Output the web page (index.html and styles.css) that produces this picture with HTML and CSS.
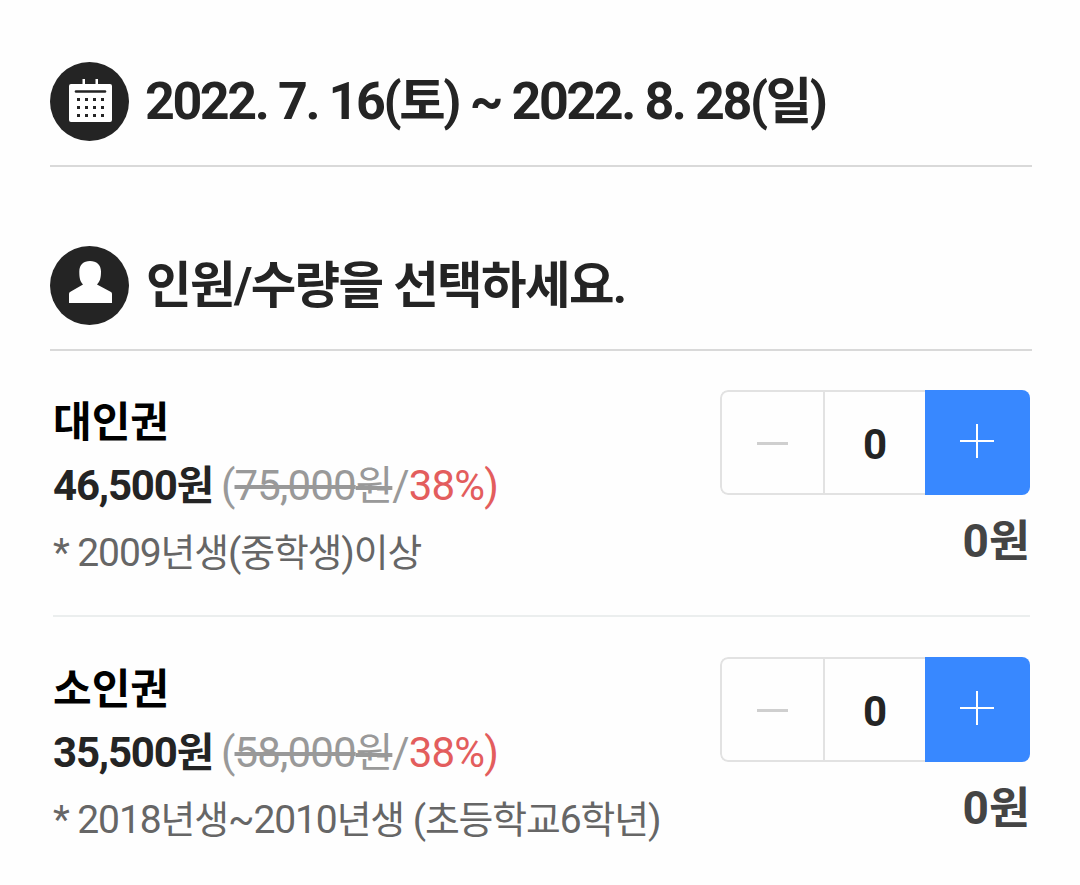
FILE: index.html
```
<!DOCTYPE html>
<html lang="ko">
<head>
    <meta charset="UTF-8">
    <title>인원/수량 선택</title>
    <link rel="stylesheet" href="styles.css">
</head>
<body>

<div class="booking">
    <div class="head">
        <svg class="head-icon" viewBox="0 0 79 79">
            <circle cx="39.5" cy="39.5" r="39.5" fill="#242424"/>
            <path d="M21 22h11.500v-5h2.500v5h10.500v-5h2.500v5h12a2 2 0 0 1 2 2v34a2 2 0 0 1-2 2H21a2 2 0 0 1-2-2V24a2 2 0 0 1 2-2z" fill="#fff"/>
            <path d="M26 29.500h29" stroke="#242424" stroke-width="2.600" stroke-linecap="round"/>
            <path d="M27 37.500h30M27 45.500h30M27 53.500h30" stroke="#242424" stroke-width="3" stroke-dasharray="3 5"/>
        </svg>
        <h2 class="date">2022. 7. 16(<span class="ko">토</span>) ~ 2022. 8. 28(<span class="ko">일</span>)</h2>
    </div>

    <div class="head">
        <svg class="head-icon" viewBox="0 0 79 79">
            <circle cx="39.5" cy="39.5" r="39.5" fill="#242424"/>
            <path d="M40 15c6.500 0 11 4 11 10.500 0 6-1 10-4 13L61 46q1 .7 1 2v9H19v-9q0-1.300 1-2l13-7.500c-3-3-3.700-7-3.700-13C29.300 19 33.500 15 40 15z" fill="#fff"/>
        </svg>
        <h2 class="guide">인원/수량을 선택하세요.</h2>
    </div>

    <ul class="tickets">
        <li class="ticket">
            <div class="info">
                <strong class="name">대인권</strong>
                <p class="price"><b>46,500<span class="ko">원</span></b> <span class="origin">(<del>75,000<span class="ko">원</span></del>/</span><span class="rate">38%)</span></p>
                <p class="note">* 2009<span class="ko">년생</span>(<span class="ko">중학생</span>)<span class="ko">이상</span></p>
            </div>
            <div class="side">
                <div class="stepper">
                    <button class="minus"><svg width="31" height="3"><path d="M0 1.500h31" stroke="#cfcfcf" stroke-width="3"/></svg></button>
                    <span class="count">0</span>
                    <button class="plus"><svg width="34" height="34"><path d="M0 17h34M17 0v34" stroke="#fff" stroke-width="2"/></svg></button>
                </div>
                <p class="sum">0<span class="ko">원</span></p>
            </div>
        </li>
        <li class="ticket">
            <div class="info">
                <strong class="name">소인권</strong>
                <p class="price"><b>35,500<span class="ko">원</span></b> <span class="origin">(<del>58,000<span class="ko">원</span></del>/</span><span class="rate">38%)</span></p>
                <p class="note">* 2018<span class="ko">년생</span>~2010<span class="ko">년생</span> (<span class="ko">초등학교</span>6<span class="ko">학년</span>)</p>
            </div>
            <div class="side">
                <div class="stepper">
                    <button class="minus"><svg width="31" height="3"><path d="M0 1.500h31" stroke="#cfcfcf" stroke-width="3"/></svg></button>
                    <span class="count">0</span>
                    <button class="plus"><svg width="34" height="34"><path d="M0 17h34M17 0v34" stroke="#fff" stroke-width="2"/></svg></button>
                </div>
                <p class="sum">0<span class="ko">원</span></p>
            </div>
        </li>
    </ul>
</div>

</body>
</html>
```
FILE: styles.css
```
* {
    box-sizing: border-box;
}
body {
    margin: 0;
    background: #fefefe;
    color: #242424;
    font-family: Roboto, "Noto Sans CJK KR", sans-serif;
}
h2, p, ul {
    margin: 0;
    padding: 0;
}
/* hangul sits a bit large next to Roboto digits */
.ko {
    font-size: 0.97em;
    line-height: 1;
}
.booking {
    padding: 62px 48px 0 50px;
}
.head {
    display: flex;
    align-items: flex-start;
    height: 105px;
    margin-bottom: 79px;
    border-bottom: 2px solid #d9d9d9;
}
.head + .head {
    margin-bottom: 0;
}
.head-icon {
    width: 79px;
    height: 79px;
    flex: none;
}
.head h2 {
    margin-left: 16px;
    line-height: 79px;
    font-weight: 700;
    white-space: nowrap;
}
.date {
    font-size: 52px;
    letter-spacing: -2.4px;
}
.head .guide {
    margin-left: 17px;
    padding-top: 1px;
    font-size: 49.5px;
    letter-spacing: -1.6px;
}
.tickets {
    list-style: none;
    margin: -1px 2px 0 3px;
}
.ticket {
    display: flex;
    justify-content: space-between;
    height: 267px;
    padding-top: 40px;
    border-bottom: 2px solid #ebeeee;
}
.ticket:last-child {
    border-bottom: 0;
}
.info {
    margin-top: 2px;
    white-space: nowrap;
}
.name {
    display: block;
    color: #000;
    font-size: 42px;
    line-height: 61px;
}
.price {
    font-size: 42px;
    line-height: 66px;
    letter-spacing: -0.85px;
}
.price b {
    margin-right: -1.5px;
    letter-spacing: -1.2px;
}
.origin {
    color: #999;
}
.origin del {
    text-decoration-thickness: 4px;
}
.rate {
    color: #e35d5d;
}
.note {
    color: #666;
    font-size: 39px;
    line-height: 68px;
    letter-spacing: -1.1px;
}
.stepper {
    display: grid;
    grid-template-columns: 105px 100px 105px;
    height: 105px;
    border-radius: 8px;
    overflow: hidden;
}
.stepper button {
    display: flex;
    align-items: center;
    justify-content: center;
    padding: 0;
    border: 0;
}
.stepper .minus {
    padding-top: 2px;
    background: none;
    border: 2px solid #e2e2e2;
    border-radius: 8px 0 0 8px;
}
.stepper .plus {
    background: #3888ff;
    padding: 0 2px 3px 0;
}
.count {
    padding-top: 2px;
    border: solid #e2e2e2;
    border-width: 2px 0;
    font-size: 42px;
    font-weight: 700;
    line-height: 101px;
    height: 105px;
    text-align: center;
}
.sum {
    color: #444;
    font-size: 46px;
    font-weight: 700;
    line-height: 92px;
    text-align: right;
}
```
